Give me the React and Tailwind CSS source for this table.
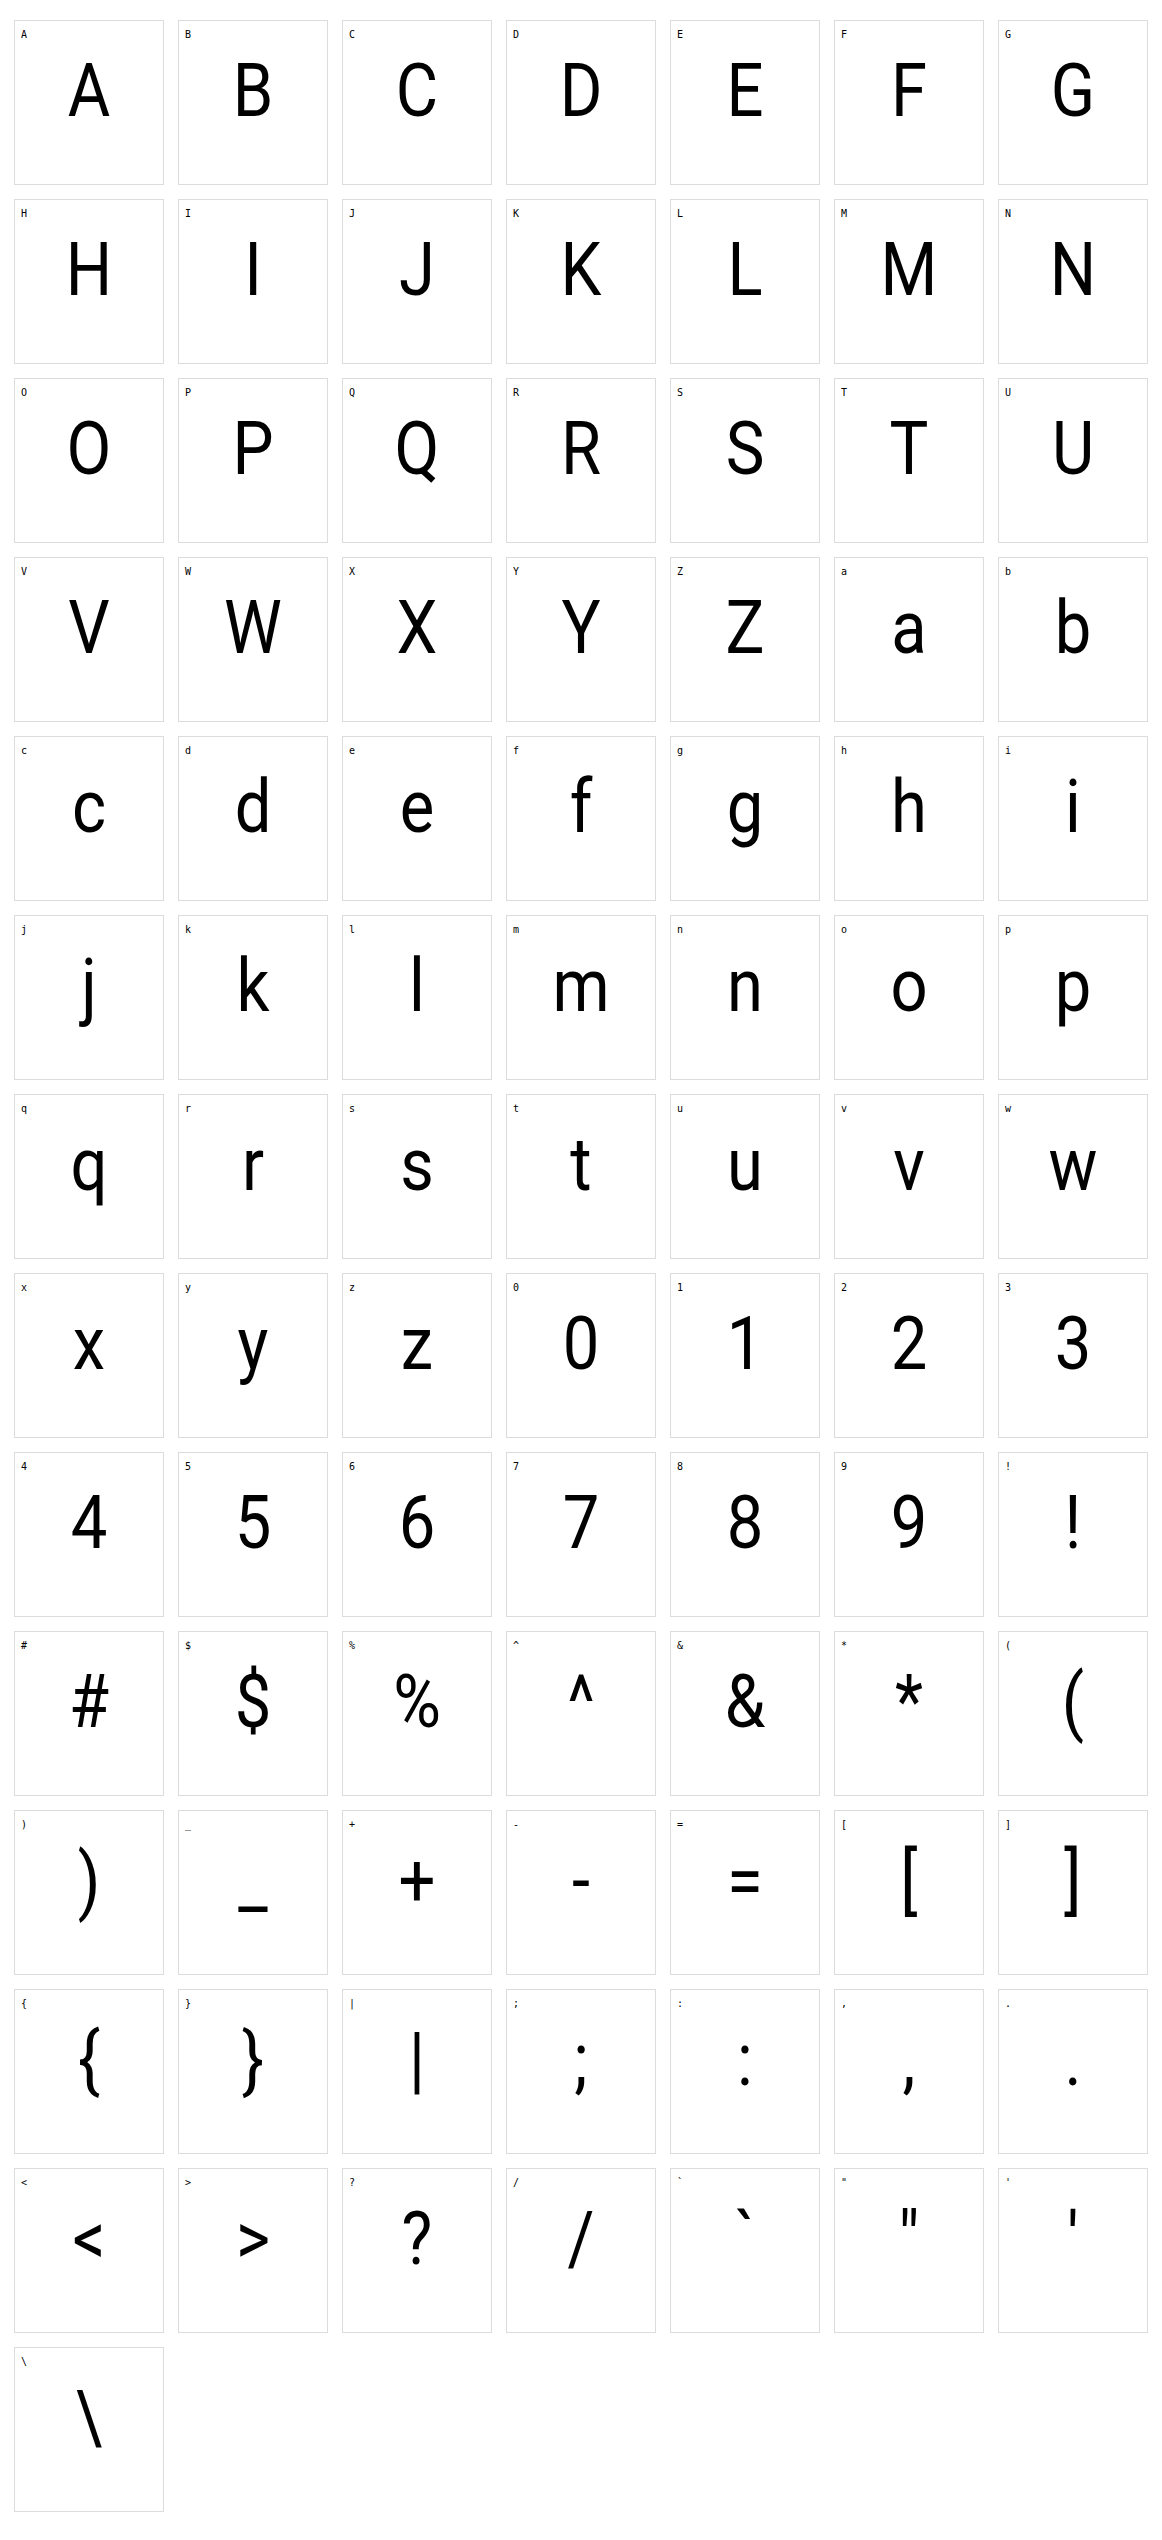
import React from 'react';

const glyphs = [
    ...'ABCDEFGHIJKLMNOPQRSTUVWXYZ',
    ...'abcdefghijklmnopqrstuvwxyz',
    ...'0123456789',
    ...'!#$%^&*()_+-=[]{}|;:,.<>?/`"\'\\',
];

const GlyphCell = ({ char }) => (
    <div className="flex h-[165px] flex-col border border-[#dcdcdc] bg-white px-[6px] pt-[8px]">
        <span className="block h-[12px] text-[10px] leading-[12px] text-black [font-family:'DejaVu_Sans_Mono',monospace]">
            {char}
        </span>
        <span className="mt-[13px] block origin-center scale-x-[0.88] text-center text-[74px] font-normal leading-[74px] text-black [font-family:Roboto,sans-serif]">
            {char}
        </span>
    </div>
);

const App = () => {
    return (
        <div className="min-h-[2540px] bg-white px-[14px] pt-[20px] pb-[28px]">
            <div className="grid grid-cols-[repeat(7,150px)] gap-[14px]">
                {glyphs.map((c, i) => (
                    <GlyphCell key={i} char={c} />
                ))}
            </div>
        </div>
    );
};

export default App;
